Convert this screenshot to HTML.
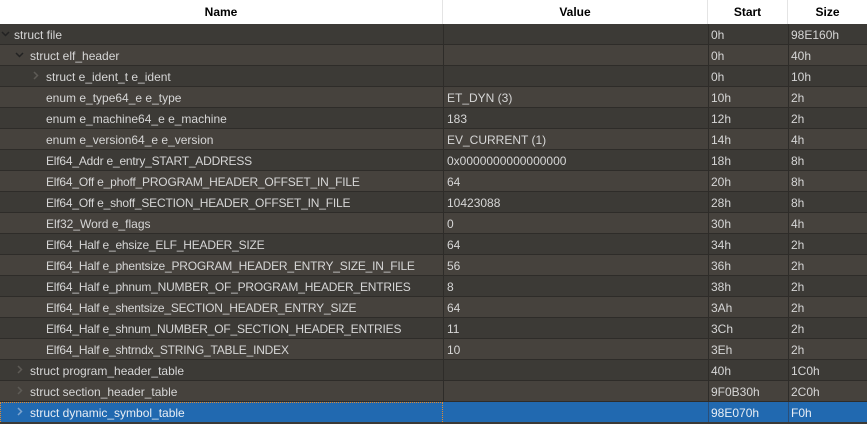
<!DOCTYPE html>
<html><head><meta charset="utf-8"><style>
*{margin:0;padding:0;box-sizing:border-box}
body{width:867px;height:422px;overflow:hidden;background:#3c3a36;font-family:"Liberation Sans","Noto Sans CJK SC",sans-serif;font-size:12px;color:#d6d6d6;position:relative}
.hdr{position:absolute;left:0;top:0;width:867px;height:24px;background:#fff;color:#000;font-weight:bold;font-size:12px}
.hdr div{position:absolute;top:0;height:24px;line-height:24px;text-align:center;border-right:1px solid #e4e4e4}
.row{position:absolute;left:0;width:867px;height:21px;border-bottom:1px solid #2e2c29;line-height:22px}
.row span{position:absolute;top:0;white-space:nowrap}
.n{letter-spacing:-0.2px}
.a{background:#3c3a36}.b{background:#46423d}
.sel{background:#2169b0;color:#e8eef5}
.vl{position:absolute;top:24px;width:1px;height:398px;background:#2e2c29}
.ch{position:absolute;top:0;width:10px;height:20px}
</style></head><body>
<div class="hdr">
<div style="left:0;width:443px">Name</div>
<div style="left:443px;width:265px">Value</div>
<div style="left:708px;width:80px">Start</div>
<div style="left:788px;width:79px;border:none">Size</div>
</div>
<div class="row a" style="top:24px"><svg class="ch" style="left:1px" viewBox="0 0 10 20"><path d="M1 8l3.5 3.5L8 8" stroke="#222" stroke-width="1.5" fill="none"/></svg><span style="left:14px">struct file</span><span style="left:711px">0h</span><span style="left:791px">98E160h</span></div>
<div class="row b" style="top:45px"><svg class="ch" style="left:15px" viewBox="0 0 10 20"><path d="M1 8l3.5 3.5L8 8" stroke="#222" stroke-width="1.5" fill="none"/></svg><span style="left:30px">struct elf_header</span><span style="left:711px">0h</span><span style="left:791px">40h</span></div>
<div class="row a" style="top:66px"><svg class="ch" style="left:31px" viewBox="0 0 10 20"><path d="M3 6l3.5 3.5L3 13" stroke="#5e5b56" stroke-width="1.5" fill="none"/></svg><span style="left:46px">struct e_ident_t e_ident</span><span style="left:711px">0h</span><span style="left:791px">10h</span></div>
<div class="row b" style="top:87px"><span style="left:46px">enum e_type64_e e_type</span><span style="left:447px">ET_DYN (3)</span><span style="left:711px">10h</span><span style="left:791px">2h</span></div>
<div class="row a" style="top:108px"><span style="left:46px">enum e_machine64_e e_machine</span><span style="left:447px">183</span><span style="left:711px">12h</span><span style="left:791px">2h</span></div>
<div class="row b" style="top:129px"><span style="left:46px">enum e_version64_e e_version</span><span style="left:447px">EV_CURRENT (1)</span><span style="left:711px">14h</span><span style="left:791px">4h</span></div>
<div class="row a" style="top:150px"><span class="n" style="left:46px">Elf64_Addr e_entry_START_ADDRESS</span><span style="left:447px">0x0000000000000000</span><span style="left:711px">18h</span><span style="left:791px">8h</span></div>
<div class="row b" style="top:171px"><span class="n" style="left:46px">Elf64_Off e_phoff_PROGRAM_HEADER_OFFSET_IN_FILE</span><span style="left:447px">64</span><span style="left:711px">20h</span><span style="left:791px">8h</span></div>
<div class="row a" style="top:192px"><span class="n" style="left:46px">Elf64_Off e_shoff_SECTION_HEADER_OFFSET_IN_FILE</span><span style="left:447px">10423088</span><span style="left:711px">28h</span><span style="left:791px">8h</span></div>
<div class="row b" style="top:213px"><span style="left:46px">Elf32_Word e_flags</span><span style="left:447px">0</span><span style="left:711px">30h</span><span style="left:791px">4h</span></div>
<div class="row a" style="top:234px"><span class="n" style="left:46px">Elf64_Half e_ehsize_ELF_HEADER_SIZE</span><span style="left:447px">64</span><span style="left:711px">34h</span><span style="left:791px">2h</span></div>
<div class="row b" style="top:255px"><span class="n" style="left:46px">Elf64_Half e_phentsize_PROGRAM_HEADER_ENTRY_SIZE_IN_FILE</span><span style="left:447px">56</span><span style="left:711px">36h</span><span style="left:791px">2h</span></div>
<div class="row a" style="top:276px"><span class="n" style="left:46px">Elf64_Half e_phnum_NUMBER_OF_PROGRAM_HEADER_ENTRIES</span><span style="left:447px">8</span><span style="left:711px">38h</span><span style="left:791px">2h</span></div>
<div class="row b" style="top:297px"><span class="n" style="left:46px">Elf64_Half e_shentsize_SECTION_HEADER_ENTRY_SIZE</span><span style="left:447px">64</span><span style="left:711px">3Ah</span><span style="left:791px">2h</span></div>
<div class="row a" style="top:318px"><span class="n" style="left:46px">Elf64_Half e_shnum_NUMBER_OF_SECTION_HEADER_ENTRIES</span><span style="left:447px">11</span><span style="left:711px">3Ch</span><span style="left:791px">2h</span></div>
<div class="row b" style="top:339px"><span class="n" style="left:46px">Elf64_Half e_shtrndx_STRING_TABLE_INDEX</span><span style="left:447px">10</span><span style="left:711px">3Eh</span><span style="left:791px">2h</span></div>
<div class="row a" style="top:360px"><svg class="ch" style="left:15px" viewBox="0 0 10 20"><path d="M3 6l3.5 3.5L3 13" stroke="#5e5b56" stroke-width="1.5" fill="none"/></svg><span style="left:30px">struct program_header_table</span><span style="left:711px">40h</span><span style="left:791px">1C0h</span></div>
<div class="row b" style="top:381px"><svg class="ch" style="left:15px" viewBox="0 0 10 20"><path d="M3 6l3.5 3.5L3 13" stroke="#5e5b56" stroke-width="1.5" fill="none"/></svg><span style="left:30px">struct section_header_table</span><span style="left:711px">9F0B30h</span><span style="left:791px">2C0h</span></div>
<div class="vl" style="left:443px;height:378px"></div>
<div class="vl" style="left:708px"></div>
<div class="vl" style="left:788px"></div>
<div class="row sel" style="top:402px;height:20px;border:none"><svg class="ch" style="left:15px" viewBox="0 0 10 20"><path d="M3 6l3.5 3.5L3 13" stroke="#7fa6cf" stroke-width="1.5" fill="none"/></svg><span style="left:30px">struct dynamic_symbol_table</span><span style="left:711px">98E070h</span><span style="left:791px">F0h</span>
<div style="position:absolute;left:0;top:0;width:443px;height:20px;border:1px dotted #e08a30;border-bottom:none"></div>
<div style="position:absolute;left:708px;top:0;width:1px;height:20px;background:#2a4e78"></div>
<div style="position:absolute;left:788px;top:0;width:1px;height:20px;background:#2a4e78"></div>
</div>
</body></html>
